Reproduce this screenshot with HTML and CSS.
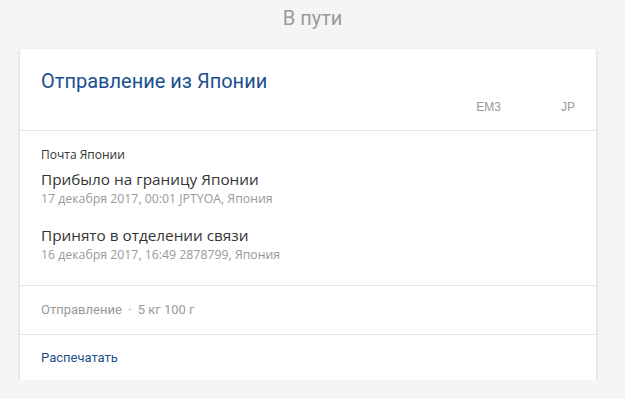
FILE: index.html
```html
<!DOCTYPE html>
<html lang="ru">
<head>
  <meta charset="utf-8">
  <meta name="viewport" content="width=device-width,initial-scale=1">
  <title>В пути</title>
  <link rel="stylesheet" href="styles.css">
</head>
<body>
  <h1 class="status">В пути</h1>

  <section class="card">
    <header class="card-head">
      <h2 class="card-title">Отправление из Японии</h2>
      <div class="codes">
        <span>EM3</span>
        <span>JP</span>
      </div>
    </header>

    <div class="events">
      <p class="carrier">Почта Японии</p>
      <div class="event">
        <p class="event-title">Прибыло на границу Японии</p>
        <p class="event-meta">17 декабря 2017, 00:01 JPTYOA, Япония</p>
      </div>
      <div class="event">
        <p class="event-title">Принято в отделении связи</p>
        <p class="event-meta">16 декабря 2017, 16:49 2878799, Япония</p>
      </div>
    </div>

    <div class="info">Отправление <span class="dot">·</span> 5 кг 100 г</div>

    <div class="actions">
      <a href="#">Распечатать</a>
    </div>
  </section>
</body>
</html>
```

FILE: styles.css
```css
:root {
  --bg: #f5f5f5;
  --fg: #333;
  --muted: #999;
  --accent: #1b4f8e;
  --line: #e3e3e3;
}
* {
  box-sizing: border-box;
  margin: 0;
  padding: 0;
}
body {
  background: var(--bg);
  color: var(--fg);
  font-family: Roboto, "Open Sans", sans-serif;
  padding: 6px 29px 0 20px;
}
.status {
  font-size: 20px;
  font-weight: 400;
  color: var(--muted);
  text-align: center;
  line-height: 24px;
  margin-bottom: 19px;
  padding-left: 9px;
}
.card {
  background: #fff;
  box-shadow: 0 1px 3px rgba(0, 0, 0, 0.18);
}
.card-head {
  padding: 20px 21px 16px 21px;
  border-bottom: 1px solid var(--line);
}
.card-title {
  font-size: 20px;
  font-weight: 400;
  color: var(--accent);
  line-height: 24px;
}
.codes {
  display: flex;
  justify-content: flex-end;
  gap: 60px;
  margin-top: 7px;
  font-family: "Liberation Sans", Arial, sans-serif;
  font-size: 12px;
  line-height: 14px;
  color: var(--muted);
}
.events {
  padding: 16px 21px 21px;
  border-bottom: 1px solid var(--line);
  font-family: "Open Sans", sans-serif;
}
.carrier {
  font-size: 12px;
  line-height: 16px;
}
.event {
  margin-top: 5px;
}
.event + .event {
  margin-top: 16px;
}
.event-title {
  font-size: 15.3px;
  line-height: 22px;
}
.event-meta {
  font-size: 12.3px;
  line-height: 18px;
  color: var(--muted);
}
.info {
  padding: 16px 21px;
  font-size: 13px;
  line-height: 16px;
  color: var(--muted);
  border-bottom: 1px solid var(--line);
}
.dot {
  margin: 0 3px;
}
.actions {
  padding: 15px 21px 14px;
  font-size: 13px;
  line-height: 16px;
}
.actions a {
  color: var(--accent);
  text-decoration: none;
}
```
